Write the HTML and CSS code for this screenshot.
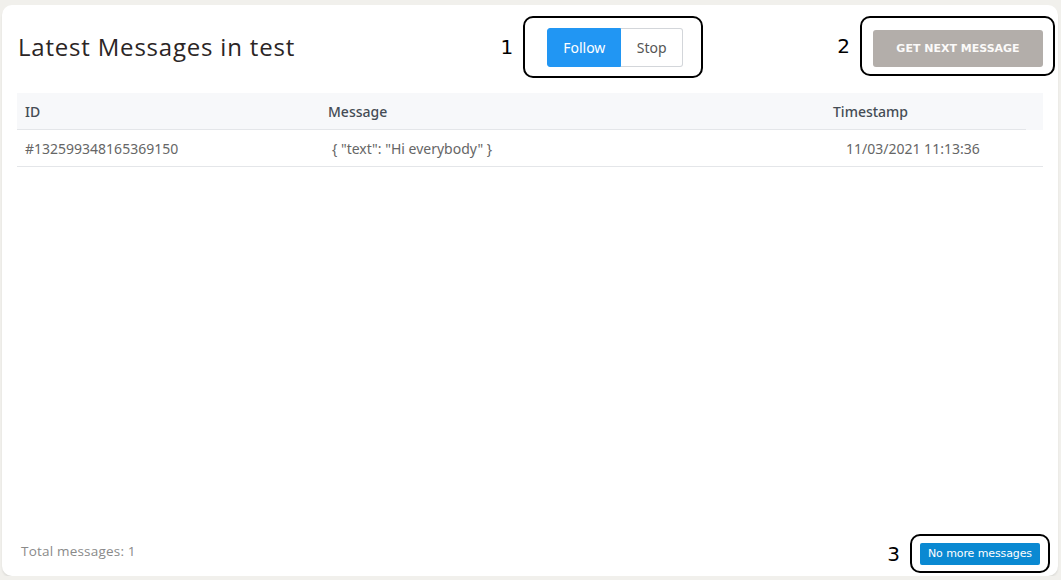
FILE: index.html
```html
<!DOCTYPE html>
<html lang="en">

<head>
    <meta charset="UTF-8">
    <meta name="viewport" content="width=device-width, initial-scale=1.0">
    <title>Latest Messages</title>
    <link rel="stylesheet" href="styles.css">
</head>

<body>

    <div class="card">

        <div class="topbar">
            <h1 class="title">Latest Messages in test</h1>

            <div class="callout callout-follow">
                <span class="callout-num">1</span>
                <div class="callout-box box-follow">
                    <div class="btn-group">
                        <button class="btn btn-follow">Follow</button>
                        <button class="btn btn-stop">Stop</button>
                    </div>
                </div>
            </div>

            <div class="callout">
                <span class="callout-num">2</span>
                <div class="callout-box box-next">
                    <button class="btn-next">GET NEXT MESSAGE</button>
                </div>
            </div>
        </div>

        <div class="msg-table">
            <div class="msg-head">
                <div class="msg-head-inner">
                    <div class="col col-id">ID</div>
                    <div class="col col-msg">Message</div>
                    <div class="col col-time">Timestamp</div>
                </div>
            </div>
            <div class="msg-row">
                <div class="col col-id">#132599348165369150</div>
                <div class="col col-msg cell-msg">{ "text": "Hi everybody" }</div>
                <div class="col col-time cell-time">11/03/2021 11:13:36</div>
            </div>
        </div>

        <div class="footer">
            <span class="total">Total messages: 1</span>

            <div class="callout">
                <span class="callout-num">3</span>
                <div class="callout-box box-more">
                    <button class="btn-more">No more messages</button>
                </div>
            </div>
        </div>
    </div>

</body>

</html>
```

FILE: styles.css
```css
* {
    box-sizing: border-box;
}

body {
    margin: 0;
    padding: 0;
    background: #f1f0ec;
    font-family: "Noto Sans", "Open Sans", sans-serif;
}

.card {
    display: flex;
    flex-direction: column;
    margin: 5px 3px 0 2px;
    height: 571px;
    background: #fff;
    border-radius: 10px;
    box-shadow: 0 2px 2px rgba(0, 0, 0, 0.08);
}

/* top bar */

.topbar {
    display: flex;
    align-items: flex-start;
    padding: 11px 3px 0 16px;
}

.title {
    flex: 1;
    margin: 14px 0 0 0;
    font-family: "Open Sans", sans-serif;
    font-size: 24px;
    font-weight: 400;
    letter-spacing: 0.8px;
    color: #2b2525;
}

.callout {
    display: flex;
    align-items: center;
    gap: 10px;
}

.callout-follow {
    margin-right: 134px;
}

.callout-num {
    font-family: "DejaVu Sans", sans-serif;
    font-size: 20px;
    color: #000;
    line-height: 1;
}

.callout-box {
    display: flex;
    border: 2px solid #000;
    border-radius: 10px;
}

.box-follow {
    width: 180px;
    height: 62px;
    padding: 10px 0 0 22px;
}

.box-next {
    width: 195px;
    height: 60px;
    padding: 12px 0 0 11px;
}

.box-more {
    width: 140px;
    height: 39px;
    align-items: center;
    padding-left: 8px;
}

.btn-group {
    display: flex;
    height: 39px;
}

.btn {
    font-family: "Noto Sans", sans-serif;
    font-size: 14px;
    padding: 0;
    cursor: pointer;
}

.btn-follow {
    width: 74px;
    background: #2196f3;
    color: #fff;
    border: 1px solid #2196f3;
    border-radius: 3px 0 0 3px;
}

.btn-stop {
    width: 62px;
    background: #fff;
    color: #555;
    border: 1px solid #d3d6da;
    border-left: none;
    border-radius: 0 3px 3px 0;
}

.btn-next {
    width: 170px;
    height: 37px;
    background: #b3aeaa;
    color: #fbfaf9;
    border: none;
    border-radius: 3px;
    font-family: "DejaVu Sans", sans-serif;
    font-size: 11px;
    font-weight: 700;
    letter-spacing: 0;
}

.btn-more {
    width: 120px;
    height: 22px;
    padding: 0;
    background: #0a89d2;
    color: #fff;
    border: none;
    border-radius: 2px;
    font-family: "DejaVu Sans", sans-serif;
    font-size: 11px;
    letter-spacing: -0.1px;
}

/* table */

.msg-table {
    margin: 15px 15px 0 15px;
    font-size: 14px;
}

.msg-head {
    background: #f7f8fa;
}

.msg-head-inner {
    display: flex;
    height: 37px;
    align-items: center;
    margin-right: 17px;
    border-bottom: 1px solid #e4e6e9;
    color: #454c55;
    font-weight: 500;
}

.msg-row {
    display: flex;
    height: 37px;
    align-items: center;
    border-bottom: 1px solid #e4e6e9;
    color: #666;
}

.col {
    padding-left: 8px;
}

.col-id {
    width: 303px;
}

.col-msg {
    width: 505px;
}

.col-time {
    flex: 1;
}

.cell-msg {
    padding-left: 12px;
}

.cell-time {
    padding-left: 21px;
}

/* footer */

.footer {
    display: flex;
    align-items: center;
    justify-content: space-between;
    margin-top: auto;
    padding: 0 8px 3px 19px;
}

.total {
    margin-bottom: 5px;
    font-family: "Open Sans", sans-serif;
    font-size: 13.5px;
    letter-spacing: 0.2px;
    color: #8a8a8a;
}
```
